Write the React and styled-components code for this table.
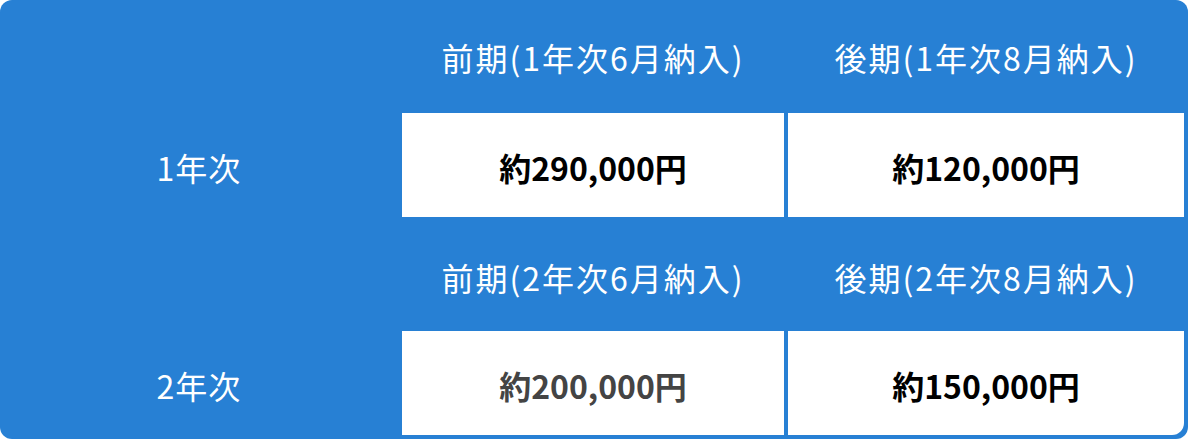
import React from 'react';
import styled, { createGlobalStyle } from 'styled-components';

const GlobalStyle = createGlobalStyle`
  html, body {
    margin: 0;
    padding: 0;
    background: #ffffff;
  }
  body {
    font-family: "Noto Sans CJK JP", "Noto Sans", sans-serif;
  }
`;

const rows = [
  {
    label: '1年次',
    terms: [
      { title: '前期(1年次6月納入)', price: '約290,000円' },
      { title: '後期(1年次8月納入)', price: '約120,000円' },
    ],
  },
  {
    label: '2年次',
    terms: [
      { title: '前期(2年次6月納入)', price: '約200,000円', muted: true },
      { title: '後期(2年次8月納入)', price: '約150,000円' },
    ],
  },
];

const App = () => {
  return (
    <>
      <GlobalStyle />
      <Table>
        {rows.map((row, i) => (
          <React.Fragment key={row.label}>
            <Spacer />
            {row.terms.map(term => (
              <TermTitle key={term.title} $first={i === 0}>{term.title}</TermTitle>
            ))}
            <YearLabel>{row.label}</YearLabel>
            {row.terms.map((term, j) => (
              <PriceCell
                key={term.price}
                $muted={term.muted}
                $last={i === rows.length - 1 && j === row.terms.length - 1}
              >
                {term.price}
              </PriceCell>
            ))}
          </React.Fragment>
        ))}
      </Table>
    </>
  );
};

export default App;

const Table = styled.div`
  width: 1188px;
  height: 439px;
  box-sizing: border-box;
  background-color: #2780d4;
  border-radius: 12px;
  display: grid;
  grid-template-columns: 398px 382px 396px;
  grid-template-rows: 113px 104px 114px 104px;
  column-gap: 4px;
  padding: 0 4px 4px 0;
`;

const Spacer = styled.div``;

const TermTitle = styled.div`
  display: flex;
  align-items: center;
  justify-content: center;
  padding-top: ${p => (p.$first ? '0' : '6px')};
  color: #ffffff;
  font-size: 32px;
  letter-spacing: 2px;
`;

const YearLabel = styled.div`
  display: flex;
  align-items: center;
  justify-content: center;
  padding-top: 4px;
  color: #ffffff;
  font-size: 32px;
  letter-spacing: 1px;
`;

const PriceCell = styled.div`
  display: flex;
  align-items: center;
  justify-content: center;
  padding-top: 4px;
  background-color: #ffffff;
  color: ${p => (p.$muted ? '#444444' : '#000000')};
  font-size: 32px;
  font-weight: 700;
  border-bottom-right-radius: ${p => (p.$last ? '12px' : '0')};
`;
